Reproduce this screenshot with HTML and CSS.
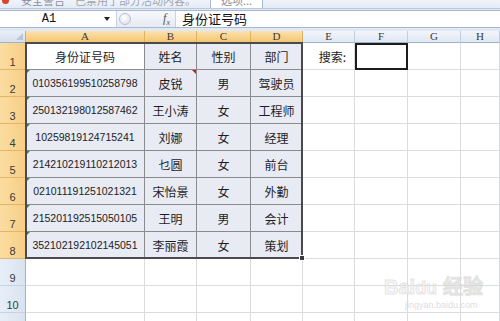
FILE: index.html
```html
<!DOCTYPE html>
<html lang="zh-CN">
<head>
<meta charset="utf-8">
<title>身份证号码</title>
<link rel="stylesheet" href="styles.css">
</head>
<body>
<div class="app">
  <div class="warnbar">
    <div class="warn-inner">
      <span class="warn-icon"></span>
      <span class="warn-title">安全警告</span>
      <span class="warn-msg">已禁用了部分活动内容。</span>
      <span class="warn-btn">选项...</span>
    </div>
  </div>
  <div class="fbar">
    <div class="namebox"><span class="nb-text">A1</span><span class="nb-arrow"></span></div>
    <div class="fmid"><span class="knob"></span><span class="fx">f<sub>x</sub></span></div>
    <div class="finput">身份证号码</div>
  </div>
  <div class="sheet">
    <div class="corner"></div>
    <div class="ch sel">A</div><div class="ch sel">B</div><div class="ch sel">C</div><div class="ch sel">D</div>
    <div class="ch">E</div><div class="ch">F</div><div class="ch">G</div><div class="ch">H</div>

    <div class="rh sel">1</div>
    <div class="c d active">身份证号码</div><div class="c d">姓名</div><div class="c d">性别</div><div class="c d">部门</div>
    <div class="c e-label">搜索:</div><div class="c search"></div><div class="c"></div><div class="c"></div>

    <div class="rh sel">2</div>
    <div class="c d num tri">010356199510258798</div><div class="c d cmt">皮锐</div><div class="c d">男</div><div class="c d">驾驶员</div>
    <div class="c"></div><div class="c"></div><div class="c"></div><div class="c"></div>

    <div class="rh sel">3</div>
    <div class="c d num tri">250132198012587462</div><div class="c d">王小涛</div><div class="c d">女</div><div class="c d">工程师</div>
    <div class="c"></div><div class="c"></div><div class="c"></div><div class="c"></div>

    <div class="rh sel">4</div>
    <div class="c d num tri">10259819124715241</div><div class="c d">刘娜</div><div class="c d">女</div><div class="c d">经理</div>
    <div class="c"></div><div class="c"></div><div class="c"></div><div class="c"></div>

    <div class="rh sel">5</div>
    <div class="c d num tri">214210219110212013</div><div class="c d">乜圆</div><div class="c d">女</div><div class="c d">前台</div>
    <div class="c"></div><div class="c"></div><div class="c"></div><div class="c"></div>

    <div class="rh sel">6</div>
    <div class="c d num tri">021011191251021321</div><div class="c d">宋怡景</div><div class="c d">女</div><div class="c d">外勤</div>
    <div class="c"></div><div class="c"></div><div class="c"></div><div class="c"></div>

    <div class="rh sel">7</div>
    <div class="c d num tri">215201192515050105</div><div class="c d">王明</div><div class="c d">男</div><div class="c d">会计</div>
    <div class="c"></div><div class="c"></div><div class="c"></div><div class="c"></div>

    <div class="rh sel">8</div>
    <div class="c d num tri">352102192102145051</div><div class="c d">李丽霞</div><div class="c d">女</div><div class="c d">策划</div>
    <div class="c"></div><div class="c"></div><div class="c"></div><div class="c"></div>

    <div class="rh">9</div>
    <div class="c"></div><div class="c"></div><div class="c"></div><div class="c"></div>
    <div class="c"></div><div class="c"></div><div class="c"></div><div class="c"></div>

    <div class="rh">10</div>
    <div class="c"></div><div class="c"></div><div class="c"></div><div class="c"></div>
    <div class="c"></div><div class="c"></div><div class="c"></div><div class="c"></div>

    <div class="rh">11</div>
    <div class="c"></div><div class="c"></div><div class="c"></div><div class="c"></div>
    <div class="c"></div><div class="c"></div><div class="c"></div><div class="c"></div>

    <div class="selection"><span class="handle"></span></div>
    <div class="watermark">
      <div class="wm-logo">Bai<span class="wm-du">du</span> 经验</div>
      <div class="wm-url">jingyan.baidu.com</div>
    </div>
  </div>
</div>
</body>
</html>
```

FILE: styles.css
```css
* { box-sizing: border-box; }
html, body { margin: 0; padding: 0; }
body {
  width: 500px;
  height: 321px;
  overflow: hidden;
  background: #fff;
  font-family: "Noto Sans CJK SC", "Liberation Sans", sans-serif;
  color: #222;
}
.app { width: 500px; height: 321px; overflow: hidden; background: #dfe8f4; }

/* warning bar (cut off at top) */
.warnbar {
  height: 9px;
  overflow: hidden;
  background: linear-gradient(#f0f4fa, #e4ebf5);
  border-bottom: 1px solid #b9c9dd;
}
.warn-inner {
  display: flex;
  align-items: center;
  gap: 6px;
  margin-top: -8px;
  padding-left: 2px;
  height: 16px;
  font-size: 11px;
  color: #8a8f98;
}
.warn-icon { width: 7px; height: 7px; border-radius: 50%; background: #d9462e; margin-right: 6px; }
.warn-msg { margin-left: 4px; color: #a0a5ad; }
.warn-btn {
  margin-left: 8px;
  padding: 0 10px;
  background: #fff;
  border: 1px solid #aab8cc;
  border-radius: 2px;
}

/* formula bar */
.fbar {
  display: flex;
  height: 18px;
  margin-top: 1px;
  background: #fff;
  border-top: 1px solid #a9b8cc;
  border-bottom: 1px solid #a9b8cc;
}
.namebox {
  width: 117px;
  display: flex;
  align-items: center;
  border-right: 1px solid #c6d2e2;
}
.nb-text {
  flex: 1;
  text-align: center;
  font-family: "Liberation Mono", monospace;
  font-size: 12px;
  color: #111;
  padding-right: 6px;
}
.nb-arrow {
  width: 0; height: 0;
  margin-right: 6px;
  border-left: 3px solid transparent;
  border-right: 3px solid transparent;
  border-top: 4px solid #222;
}
.fmid {
  width: 58px;
  display: flex;
  align-items: center;
  justify-content: space-between;
  padding: 0 5px 0 2px;
  background: linear-gradient(#f6f8fb, #e6ebf2);
}
.knob {
  width: 12px; height: 12px;
  border-radius: 50%;
  border: 1px solid #b5c0cf;
  background: radial-gradient(circle at 40% 35%, #ffffff, #d5dce6);
}
.fx {
  font-family: "Liberation Serif", serif;
  font-style: italic;
  font-size: 12px;
  color: #555;
}
.fx sub { font-size: 8px; }
.finput {
  flex: 1;
  padding-left: 6px;
  border-left: 1px solid #c6d2e2;
  font-size: 13px;
  line-height: 16px;
  color: #111;
}

/* sheet grid */
.sheet {
  position: relative;
  margin-top: 3px;
  display: grid;
  grid-template-columns: 26px 119px 52px 54px 52px 52px 53px 53px 1fr;
  grid-template-rows: 12px repeat(11, 27px);
  background: #fff;
}
.corner {
  background: linear-gradient(#e8eef7, #d6e0ee);
  border-right: 1px solid #9eb3cc;
  border-bottom: 1px solid #9eb3cc;
  position: relative;
}
.corner::after {
  content: "";
  position: absolute;
  right: 2px; bottom: 2px;
  width: 0; height: 0;
  border-left: 7px solid transparent;
  border-bottom: 7px solid #b8c7da;
}
.ch {
  font-family: "Liberation Serif", serif;
  font-size: 11px;
  line-height: 11px;
  text-align: center;
  color: #3a3a3a;
  background: linear-gradient(#f3f6fb, #dfe7f2);
  border-right: 1px solid #c0cee0;
  border-bottom: 1px solid #9eb3cc;
}
.ch.sel {
  background: linear-gradient(#fbe2ae, #f5c672);
  border-right: 1px solid #e1b25d;
  border-bottom: 1px solid #f0a640;
}
.rh {
  display: flex;
  align-items: flex-end;
  justify-content: center;
  padding-bottom: 1px;
  font-family: "Liberation Sans", sans-serif;
  font-size: 11px;
  color: #3a3a3a;
  background: linear-gradient(90deg, #e7eef8, #d9e3f0);
  border-right: 1px solid #9eb3cc;
  border-bottom: 1px solid #c5d2e3;
}
.rh.sel {
  background: linear-gradient(90deg, #fbdda2, #f7cf86);
  border-right: 1px solid #f0a640;
  border-bottom: 1px solid #e3b569;
}
.c {
  position: relative;
  display: flex;
  align-items: center;
  justify-content: center;
  font-size: 12px;
  color: #1e1e1e;
  border-right: 1px solid #dadcde;
  border-bottom: 1px solid #dadcde;
}
.c.d {
  background: #e8eaf4;
  border-right: 1px solid #8a8a8f;
  border-bottom: 1px solid #8a8a8f;
}
.c.active { background: #fff; }
.c.num {
  font-family: "Liberation Sans", sans-serif;
  font-size: 10.5px;
  color: #222;
}
.c.tri::before {
  content: "";
  position: absolute;
  left: 0; top: 0;
  width: 0; height: 0;
  border-top: 4px solid #2f8a3a;
  border-right: 4px solid transparent;
}
.c.cmt::after {
  content: "";
  position: absolute;
  right: 0; top: 0;
  width: 0; height: 0;
  border-top: 4px solid #c02020;
  border-left: 4px solid transparent;
}
.c.e-label {
  justify-content: flex-end;
  padding-right: 8px;
  color: #222;
}
.c.search {
  border: 2px solid #1c1c1c;
}
.selection {
  position: absolute;
  grid-row: 2 / 10;
  grid-column: 2 / 6;
  top: -1px; left: -1px; right: 0; bottom: 0;
  border: 2px solid #4a4a4e;
  pointer-events: none;
}
.handle {
  position: absolute;
  right: -4px; bottom: -4px;
  width: 6px; height: 6px;
  background: #3a3a3a;
  border: 1px solid #fff;
}
.watermark {
  position: absolute;
  left: 384px;
  top: 246px;
  text-align: center;
  pointer-events: none;
}
.wm-logo {
  font-family: "Liberation Sans", sans-serif;
  font-size: 20px;
  font-weight: bold;
  line-height: 21px;
  color: rgba(245, 245, 245, 0.6);
  -webkit-text-stroke: 1px rgba(205, 205, 205, 0.5);
}
.wm-du { font-size: 18px; }
.wm-url {
  font-family: "Liberation Sans", sans-serif;
  font-size: 9px;
  line-height: 12px;
  color: rgba(205, 205, 205, 0.7);
  padding-left: 16px;
}
```
